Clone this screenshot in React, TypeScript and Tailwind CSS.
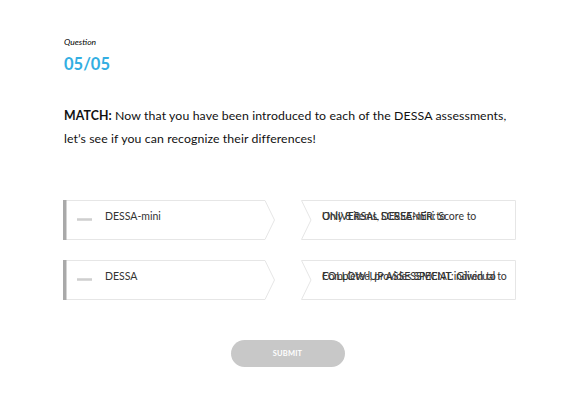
import React from 'react';

const rows = [
    { left: 'DESSA-mini', a: 'UNIVERSAL SCREENER: Score to', b: 'Only 8 items, DESSA-mini to' },
    { left: 'DESSA', a: 'FOLLOW-UP ASSESSMENT: Given to', b: 'Completed, provides SPECIAL individual to' },
];

function LeftCard({ label }: { label: string }) {
    return (
        <div className="relative w-[212px] h-[40px]">
            <svg className="absolute inset-0" width="212" height="40" viewBox="0 0 212 40">
                <polygon points="0.5,0.5 202,0.5 211.5,20 202,39.5 0.5,39.5" fill="#fff" stroke="#e6e6e6" />
                <rect x="0" y="0" width="3.5" height="40" fill="#a9a9a9" />
            </svg>
            <div className="relative flex items-start h-full pl-[14px] pt-[10px]">
                <span className="mt-[8px] w-[15px] h-[3px] bg-[#cfcfcf] border-y border-[#dadada]" />
                <span className="ml-[13px] text-[10.5px] text-[#333] leading-[13px]">{label}</span>
            </div>
        </div>
    );
}

function RightCard({ a, b }: { a: string; b: string }) {
    return (
        <div className="relative w-[215px] h-[40px]">
            <svg className="absolute inset-0" width="215" height="40" viewBox="0 0 215 40">
                <polygon points="0.5,0.5 214.5,0.5 214.5,39.5 0.5,39.5 10,20" fill="#fff" stroke="#e6e6e6" />
            </svg>
            {/* two answer labels stacked on top of each other */}
            <span className="absolute left-[21px] top-[10px] text-[10.5px] text-[#333] leading-[13px] whitespace-nowrap">{a}</span>
            <span className="absolute left-[21px] top-[10px] text-[10.5px] text-[#333] leading-[13px] whitespace-nowrap tracking-[-0.3px]">{b}</span>
        </div>
    );
}

export default function App() {
    return (
        <main className="w-[579px] min-h-[415px] bg-white font-['Lato',sans-serif] text-black">
            <div className="pl-[64px] pr-[60px] pt-[36px]">
                <p className="italic text-[8.5px] leading-[12px]">Question</p>
                <h1 className="mt-[6px] text-[16.5px] font-bold text-[#33aee2] leading-[20px]">05/05</h1>

                <p className="mt-[30px] text-[12.3px] leading-[23px] text-[#111] tracking-[0.1px]">
                    <b>MATCH:</b> Now that you have been introduced to each of the DESSA assessments, let’s see if you can recognize their differences!
                </p>

                <div className="mt-[50px] flex flex-col gap-[20px] -ml-[1px]">
                    {rows.map(r => (
                        <div key={r.left} className="flex gap-[26px]">
                            <LeftCard label={r.left} />
                            <RightCard a={r.a} b={r.b} />
                        </div>
                    ))}
                </div>

                <div className="mt-[40px] flex justify-center pr-[8px]">
                    <button className="w-[114px] h-[27px] rounded-full bg-[#c8c8c8] text-white text-[7.5px] font-bold tracking-wide">SUBMIT</button>
                </div>
            </div>
        </main>
    );
}
